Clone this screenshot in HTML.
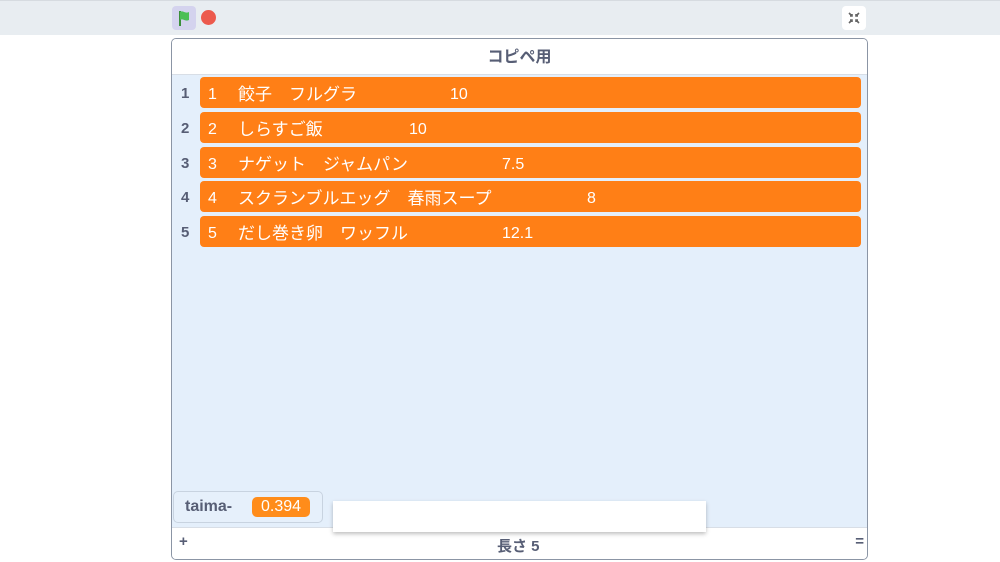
<!DOCTYPE html>
<html><head><meta charset="utf-8"><style>
body{margin:0;width:1000px;height:562px;background:#fff;position:relative;overflow:hidden;font-family:"Liberation Sans","Noto Sans CJK JP",sans-serif}
.top{position:absolute;left:0;top:0;width:1000px;height:34px;background:#e8edf1;border-top:1px solid #d6dbe0}
.flag{position:absolute;left:172px;top:6px;width:24px;height:24px;background:#d4d3ee;border-radius:4px}
.stop{position:absolute;left:201px;top:10px;width:15px;height:15px;background:#ec5a4d;border-radius:50%}
.full{position:absolute;left:842px;top:6px;width:24px;height:24px;background:#fff;border-radius:4px}
.panel{position:absolute;left:171px;top:38px;width:695px;height:520px;border:1px solid #8b95a5;border-radius:5px;background:#e4effb;overflow:hidden}
.hd{position:absolute;left:0;top:0;width:100%;height:35px;background:#fff;border-bottom:1px solid #d8dee6;text-align:center;line-height:38px;font-size:16px;font-weight:bold;color:#575e75}
.ft{position:absolute;left:0;bottom:0;width:100%;height:31px;background:#fff;border-top:1px solid #d8dee6;font-size:15px;color:#575e75;font-weight:bold}
.row{position:absolute;left:28px;width:661px;height:31px;background:#ff7f16;border-radius:4px;color:#fff;font-size:16px;line-height:36px;white-space:pre}
.row .j{font-size:17px}
.idx{position:absolute;left:9px;font-size:15px;font-weight:bold;color:#575e75}
.t{position:absolute}
</style></head><body>
<div class="top"></div>
<div class="flag"><svg width="24" height="24"><path d="M8 5v15" stroke="#3a8f3a" stroke-width="2"/><path d="M8 6c3-2 5 2 9 0v8c-4 2-6-2-9 0z" fill="#4cbf56"/></svg></div>
<div class="stop"></div>
<div class="full"><svg width="24" height="24" stroke="#666" stroke-width="1.6" fill="none"><path d="M7 7l3 3M10 8v2H8M17 7l-3 3M14 8v2h2M7 17l3-3M8 14h2v2M17 17l-3-3M16 14h-2v2"/></svg></div>
<div class="panel">
<div class="hd">コピペ用</div>
<div class="idx" style="top:46px">1</div><div class="row" style="top:38px"><span class="t" style="left:8px">1</span><span class="t j" style="left:38px">餃子　フルグラ</span><span class="t" style="left:250px">10</span></div>
<div class="idx" style="top:81px">2</div><div class="row" style="top:73px"><span class="t" style="left:8px">2</span><span class="t j" style="left:38px">しらすご飯</span><span class="t" style="left:209px">10</span></div>
<div class="idx" style="top:116px">3</div><div class="row" style="top:108px"><span class="t" style="left:8px">3</span><span class="t j" style="left:38px">ナゲット　ジャムパン</span><span class="t" style="left:302px">7.5</span></div>
<div class="idx" style="top:150px">4</div><div class="row" style="top:142px"><span class="t" style="left:8px">4</span><span class="t j" style="left:38px">スクランブルエッグ　春雨スープ</span><span class="t" style="left:387px">8</span></div>
<div class="idx" style="top:185px">5</div><div class="row" style="top:177px"><span class="t" style="left:8px">5</span><span class="t j" style="left:38px">だし巻き卵　ワッフル</span><span class="t" style="left:302px">12.1</span></div>
<div class="ft"><span class="t" style="left:7px;top:5px">+</span><span class="t" style="left:325px;top:7px">長さ 5</span><span class="t" style="right:3px;top:5px">=</span></div>
</div>
<div style="position:absolute;left:173px;top:491px;width:148px;height:30px;background:#e6f0fb;border:1px solid #c8d3e0;border-radius:5px;font-size:16px;font-weight:bold;color:#575e75">
<span class="t" style="left:11px;top:6px">taima-</span>
<span class="t" style="left:78px;top:5px;width:58px;height:20px;background:#ff8c1a;border-radius:5px;color:#fff;font-weight:normal;text-align:center;line-height:20px">0.394</span></div>
<div style="position:absolute;left:333px;top:501px;width:373px;height:31px;background:#fff;box-shadow:0 2px 4px rgba(0,0,0,.25)"></div>
</body></html>
